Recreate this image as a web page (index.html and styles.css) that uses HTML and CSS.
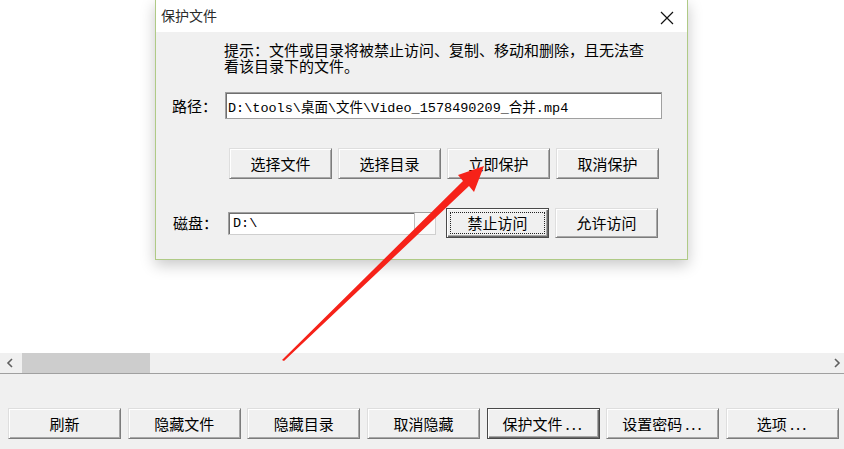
FILE: index.html
```html
<!DOCTYPE html>
<html lang="zh-CN">
<head>
    <meta charset="UTF-8">
    <title>保护文件</title>
    <link rel="stylesheet" href="styles.css">
</head>
<body>

<div class="workspace">
    <div class="dialog">
        <div class="dialog-title">
            <span>保护文件</span>
            <svg class="close-icon" width="14" height="14" viewBox="0 0 14 14">
                <path d="M1 1 L13 13 M13 1 L1 13" stroke="#111" stroke-width="1.2" fill="none"/>
            </svg>
        </div>
        <div class="dialog-body">
            <p class="hint">提示：文件或目录将被禁止访问、复制、移动和删除，且无法查<br>看该目录下的文件。</p>

            <div class="path-row">
                <label class="field-label">路径：</label>
                <input class="textbox path-box" type="text" value="D:\tools\桌面\文件\Video_1578490209_合并.mp4" readonly>
            </div>

            <div class="button-row">
                <button class="btn">选择文件</button>
                <button class="btn">选择目录</button>
                <button class="btn">立即保护</button>
                <button class="btn">取消保护</button>
            </div>

            <div class="disk-row">
                <label class="field-label disk-label">磁盘：</label>
                <div class="combo">
                    <span class="combo-text">D:\</span>
                    <span class="combo-drop">
                        <svg width="7" height="4" viewBox="0 0 7 4"><path d="M0 0 L7 0 L3.5 4 Z" fill="#c8c8c8"/></svg>
                    </span>
                </div>
                <button class="btn btn-default btn-focus">禁止访问</button>
                <button class="btn">允许访问</button>
            </div>
        </div>
    </div>
</div>

<div class="hscroll">
    <svg class="scroll-arrow" width="8" height="10" viewBox="0 0 8 10">
        <path d="M6 1 L2 5 L6 9" stroke="#606060" stroke-width="1.6" fill="none"/>
    </svg>
    <div class="scroll-track"><div class="scroll-thumb"></div></div>
    <svg class="scroll-arrow" width="8" height="10" viewBox="0 0 8 10">
        <path d="M2 1 L6 5 L2 9" stroke="#606060" stroke-width="1.6" fill="none"/>
    </svg>
</div>

<div class="toolbar">
    <button class="btn tool-btn">刷新</button>
    <button class="btn tool-btn">隐藏文件</button>
    <button class="btn tool-btn">隐藏目录</button>
    <button class="btn tool-btn">取消隐藏</button>
    <button class="btn tool-btn btn-default">保护文件<span class="dots">...</span></button>
    <button class="btn tool-btn">设置密码<span class="dots">...</span></button>
    <button class="btn tool-btn">选项<span class="dots">...</span></button>
</div>

<!-- red annotation arrow drawn over the screenshot -->
<svg class="arrow-overlay" width="844" height="449" viewBox="0 0 844 449">
    <polygon points="484,166 458,175 463,181 282,360 284,361 469,186 474,192" fill="#f62219"/>
</svg>

</body>
</html>
```

FILE: styles.css
```css
body {
    margin: 0;
    width: 844px;
    height: 449px;
    overflow: hidden;
    position: relative;
    background: #fff;
    font-family: "Noto Sans CJK SC", "Liberation Sans", sans-serif;
    font-size: 15px;
    color: #000;
}
.workspace {
    height: 353px;
    padding-left: 155px;
    box-sizing: border-box;
    background: #fff;
}
.dialog {
    width: 533px;
    border: 1px solid #afca86;
    border-top: none;
    box-sizing: border-box;
    background: #f0f0f0;
    box-shadow: 0 5px 14px rgba(0, 0, 0, 0.22);
}
.dialog-title {
    height: 32px;
    background: #fff;
    display: flex;
    align-items: center;
    justify-content: space-between;
    padding: 0 13px 0 5px;
    font-size: 14px;
    color: #2a2a2a;
}
.dialog-title span {
    margin-top: -2px;
}
.close-icon {
    margin-top: 3px;
}
.dialog-body {
    padding: 10px 0 21px 0;
}
.hint {
    margin: 0 0 0 68px;
    line-height: 16px;
}
.path-row {
    display: flex;
    align-items: center;
    margin-top: 18px;
    padding-left: 16px;
}
.field-label {
    width: 53px;
    line-height: 20px;
}
.textbox {
    height: 27px;
    box-sizing: border-box;
    border: 1px solid #a0a0a0;
    box-shadow: inset 1px 1px #6f6f6f;
    background: #fff;
    margin: 0;
    padding: 0 0 0 2px;
    font-family: "Liberation Mono", "Noto Sans CJK SC", monospace;
    font-size: 13.5px;
    color: #000;
    outline: none;
}
.path-box {
    width: 437px;
}
.button-row {
    display: flex;
    gap: 6px;
    margin-top: 29px;
    padding-left: 73px;
}
.btn {
    width: 103px;
    height: 31px;
    box-sizing: border-box;
    padding: 0;
    background: #f0f0f0;
    border: 1px solid;
    border-color: #dedede #7c7c7c #7c7c7c #dedede;
    box-shadow: inset 1px 1px #fff, inset -1px -1px #a8a8a8;
    font-family: "Noto Sans CJK SC", "Liberation Sans", sans-serif;
    font-size: 15px;
    line-height: 20px;
    color: #000;
}
.btn-default {
    border-color: #4a4a4a;
    box-shadow: inset 1px 1px #fff, inset -1px -1px #6a6a6a, inset -2px -2px #a8a8a8;
}
.btn-focus {
    outline: 1px dotted #222;
    outline-offset: -5px;
}
.disk-row {
    display: flex;
    align-items: center;
    margin-top: 29px;
    padding-left: 17px;
}
.disk-row .btn {
    height: 30px;
}
.disk-label {
    width: 56px;
}
.combo {
    width: 208px;
    height: 23px;
    flex: none;
    box-sizing: border-box;
    margin-right: 10px;
    margin-left: -1px;
    display: flex;
    border: 1px solid #a0a0a0;
    border-right-color: #cfcfcf;
    border-bottom-color: #cfcfcf;
    box-shadow: inset 1px 1px #6f6f6f;
    background: #fff;
}
.combo-text {
    flex: 1;
    padding-left: 4px;
    font-family: "Liberation Mono", monospace;
    font-size: 13.5px;
    line-height: 21px;
}
.combo-drop {
    width: 20px;
    display: flex;
    align-items: center;
    justify-content: center;
    border-left: 1px solid #bdbdbd;
    background: #fafafa;
}
.disk-row .btn + .btn {
    margin-left: 6px;
}
.hscroll {
    height: 20px;
    display: flex;
    align-items: center;
    background: #f0f0f0;
    border-bottom: 1px solid #a0a0a0;
}
.scroll-arrow {
    width: 8px;
    margin: 0 5px 0 6px;
    flex: none;
}
.hscroll .scroll-arrow:last-child {
    margin: 0 3px 0 4px;
}
.scroll-track {
    flex: 1;
    height: 20px;
    margin-left: 3px;
}
.scroll-thumb {
    width: 128px;
    height: 20px;
    background: #cdcdcd;
}
.toolbar {
    height: 75px;
    box-sizing: border-box;
    padding: 34px 0 0 8px;
    display: flex;
    gap: 6.7px;
    background: #f0f0f0;
}
.tool-btn {
    width: 113px;
}
.dots {
    letter-spacing: 2px;
    margin-left: 3px;
}
.arrow-overlay {
    position: absolute;
    left: 0;
    top: 0;
    pointer-events: none;
}
```
